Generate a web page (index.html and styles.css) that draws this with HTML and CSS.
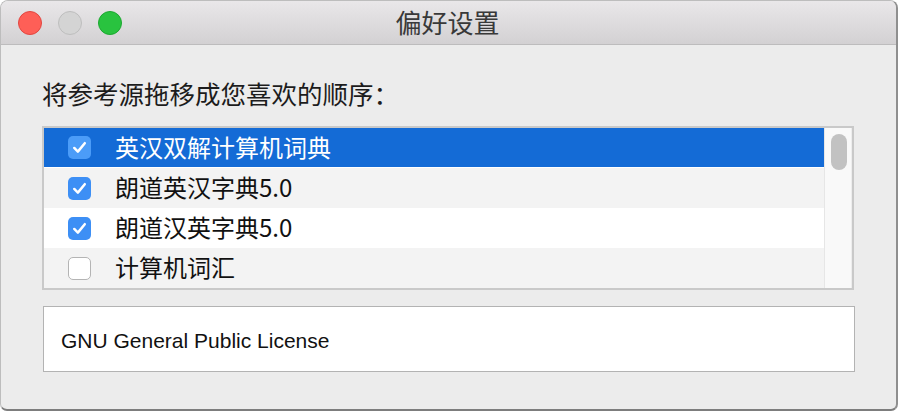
FILE: index.html
```html
<!DOCTYPE html>
<html lang="zh-CN">
<head>
<meta charset="utf-8">
<title>偏好设置</title>
<link rel="stylesheet" href="styles.css">
</head>
<body>
<div class="window">
  <div class="titlebar">
    <div class="lights">
      <span class="light red"></span>
      <span class="light gray"></span>
      <span class="light green"></span>
    </div>
    <div class="title">偏好设置</div>
  </div>
  <div class="content">
    <div class="label">将参考源拖移成您喜欢的顺序：</div>
    <div class="listbox">
      <div class="rows">
        <div class="row selected">
          <span class="check on"><svg viewBox="0 0 24 24" width="23" height="23"><path d="M6.5 12.5 L10.3 16.3 L17.5 7.5" fill="none" stroke="#fff" stroke-width="2.6" stroke-linecap="round" stroke-linejoin="round"/></svg></span>
          <span class="name">英汉双解计算机词典</span>
        </div>
        <div class="row alt">
          <span class="check on"><svg viewBox="0 0 24 24" width="23" height="23"><path d="M6.5 12.5 L10.3 16.3 L17.5 7.5" fill="none" stroke="#fff" stroke-width="2.6" stroke-linecap="round" stroke-linejoin="round"/></svg></span>
          <span class="name">朗道英汉字典5.0</span>
        </div>
        <div class="row">
          <span class="check on"><svg viewBox="0 0 24 24" width="23" height="23"><path d="M6.5 12.5 L10.3 16.3 L17.5 7.5" fill="none" stroke="#fff" stroke-width="2.6" stroke-linecap="round" stroke-linejoin="round"/></svg></span>
          <span class="name">朗道汉英字典5.0</span>
        </div>
        <div class="row alt">
          <span class="check off"></span>
          <span class="name">计算机词汇</span>
        </div>
      </div>
      <div class="scrollbar"><div class="thumb"></div></div>
    </div>
    <div class="license">GNU General Public License</div>
  </div>
</div>
</body>
</html>
```

FILE: styles.css
```css
* { box-sizing: border-box; }
html, body { margin: 0; padding: 0; background: #ffffff; }
body {
  width: 898px;
  height: 412px;
  font-family: "Noto Sans CJK SC", "Noto Sans", sans-serif;
}
.window {
  width: 898px;
  height: 411px;
  background: #ececec;
  border: 1px solid #bdbdbd;
  border-right: 2px solid #8f8f8f;
  border-bottom: 2px solid #7d7d7d;
  border-radius: 8px 8px 7px 7px;
  overflow: hidden;
  display: flex;
  flex-direction: column;
}
.titlebar {
  position: relative;
  height: 44px;
  flex: none;
  background: linear-gradient(#e9e7e9, #d3d1d3);
  border-bottom: 1px solid #bdbcbd;
  display: flex;
  align-items: center;
  justify-content: center;
}
.lights {
  position: absolute;
  left: 17px;
  top: 10px;
  display: flex;
  gap: 16px;
}
.light {
  width: 24px;
  height: 24px;
  border-radius: 50%;
  display: block;
}
.red { background: #fe5f57; border: 1px solid #e24640; }
.gray { background: #d4d4d4; border: 1px solid #bebebe; }
.green { background: #29c33f; border: 1px solid #1ca830; }
.title {
  font-size: 26px;
  line-height: 30px;
  color: #393939;
  margin-top: -2px;
  margin-left: -2px;
}
.content {
  padding: 33px 42px 0 41px;
  display: flex;
  flex-direction: column;
}
.label {
  font-size: 25.5px;
  line-height: 30px;
  color: #1c1c1c;
}
.listbox {
  margin-top: 18px;
  height: 164px;
  border: 2px solid #c9c9c9;
  display: flex;
  background: #fff;
}
.rows {
  flex: 1;
  display: flex;
  flex-direction: column;
}
.row {
  height: 40px;
  display: flex;
  align-items: center;
  padding-left: 24px;
  background: #ffffff;
}
.row.alt { background: #f3f3f3; }
.row.selected { background: #146bd6; border-bottom: 1px solid #fff; }
.row.selected .name { color: #ffffff; }
.check {
  width: 23px;
  height: 23px;
  border-radius: 5px;
  flex: none;
  display: flex;
}
.check.on { background: #3d8ff5; }
.row.selected .check.on { background: #4b9cf8; }
.check.off { background: #fff; border: 1px solid #b4b4b4; }
.name {
  margin-left: 24px;
  font-size: 24px;
  line-height: 30px;
  color: #111;
  margin-top: -2px;
}
.scrollbar {
  width: 28px;
  flex: none;
  background: #f9f9f9;
  border-left: 1px solid #e6e6e6;
  border-right: 1px solid #ededed;
  padding: 6px 0 0 6px;
}
.thumb {
  width: 16px;
  height: 36px;
  border-radius: 8px;
  background: #c2c2c2;
}
.license {
  margin-top: 16px;
  margin-left: 1px;
  height: 66px;
  width: 812px;
  background: #fff;
  border: 1px solid #b3b3b3;
  padding-left: 17px;
  padding-top: 4px;
  display: flex;
  align-items: center;
  font-family: "Liberation Sans", Arial, sans-serif;
  font-size: 21px;
  color: #111;
}
```
